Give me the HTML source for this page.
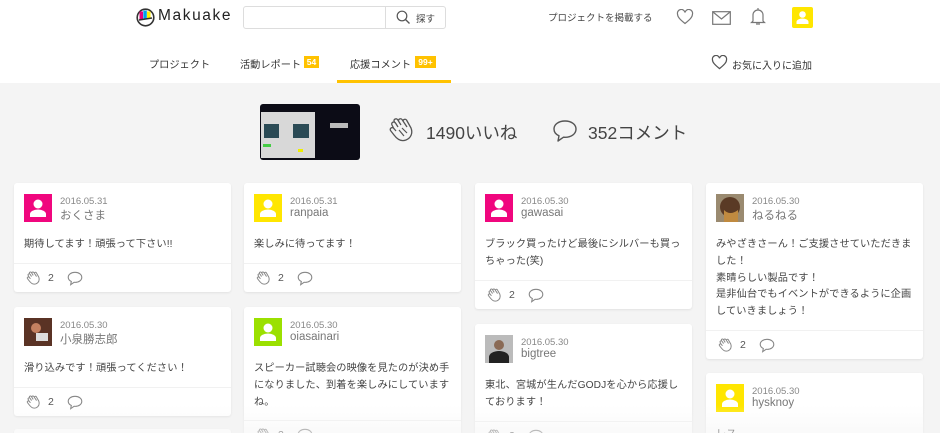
<!DOCTYPE html>
<html><head><meta charset="utf-8">
<style>
*{margin:0;padding:0;box-sizing:border-box}
html,body{width:940px;height:433px;overflow:hidden}
body{background:#f4f4f4;font-family:"Liberation Sans","Noto Sans CJK JP",sans-serif;color:#444;position:relative}
.hdr{position:absolute;left:0;top:0;width:940px;height:83px;background:#fff}
.abs{position:absolute}
.t{white-space:nowrap}
.card{position:absolute;width:217px;background:#fff;border-radius:3px;box-shadow:0 1px 2px rgba(0,0,0,.08);overflow:hidden}
.av{position:absolute;left:10px;top:11px;width:28px;height:28px}
.av svg{display:block}
.dt{position:absolute;left:46px;top:13px;font-size:9.5px;color:#888}
.nm{position:absolute;left:46px;top:24px;font-size:11.5px;color:#777}
.bd{padding:54px 8px 9px 10px;font-size:10.2px;letter-spacing:0.1px;line-height:16.8px;color:#444}
.ft{border-top:1px solid #f1f1f1;height:29px;position:relative}
.ft .clap{position:absolute;left:12px;top:7px}
.ft .n{position:absolute;left:34px;top:8px;font-size:10.5px;color:#555}
.ft .bub{position:absolute;left:53px;top:7px}
.fade{position:absolute;left:0;top:405px;width:940px;height:28px;background:linear-gradient(rgba(244,244,244,0),rgba(244,244,244,.5))}
</style></head><body>
<div class="hdr">
 <svg class="abs" style="left:136px;top:8px" width="19" height="19" viewBox="0 0 19 19">
  <circle cx="9.5" cy="9.5" r="8.3" fill="#fff" stroke="#333" stroke-width="1.6"/>
  <rect x="3.5" y="3.5" width="3.5" height="8" fill="#e6007e"/>
  <rect x="7.3" y="2.5" width="3.5" height="8" fill="#00a0e9"/>
  <rect x="11" y="3.5" width="3.5" height="7" fill="#fff100"/>
  <path d="M3 12 L16 10" stroke="#333" stroke-width="1.4" fill="none"/>
 </svg>
 <div class="abs t" style="left:158px;top:7px;font-size:15.5px;letter-spacing:1.6px;color:#222">Makuake</div>
 <div class="abs" style="left:243px;top:6px;width:203px;height:23px;border:1px solid #ddd;border-radius:3px"></div>
 <div class="abs" style="left:385px;top:6px;width:1px;height:23px;background:#ddd"></div>
 <svg class="abs" style="left:396px;top:10px" width="15" height="15" viewBox="0 0 15 15"><circle cx="6" cy="6" r="4.8" fill="none" stroke="#555" stroke-width="1.2"/><path d="M9.5 9.5L13.5 13.5" stroke="#555" stroke-width="1.3"/></svg>
 <div class="abs t" style="left:416px;top:11px;font-size:9.5px;color:#444">探す</div>
 <div class="abs t" style="left:548px;top:10px;font-size:9.5px;color:#444">プロジェクトを掲載する</div>
 <svg class="abs" style="left:676px;top:9px" width="18" height="16" viewBox="0 0 18 16"><path d="M9 14.5 C4 10.5 1.5 8 1.5 5 A3.6 3.6 0 0 1 9 3.5 A3.6 3.6 0 0 1 16.5 5 C16.5 8 14 10.5 9 14.5Z" fill="none" stroke="#777" stroke-width="1.2"/></svg>
 <svg class="abs" style="left:712px;top:11px" width="19" height="14" viewBox="0 0 19 14"><rect x="0.7" y="0.7" width="17.6" height="12.6" fill="none" stroke="#777" stroke-width="1.2"/><path d="M1 1L9.5 8L18 1" fill="none" stroke="#777" stroke-width="1.2"/></svg>
 <svg class="abs" style="left:750px;top:7px" width="16" height="19" viewBox="0 0 16 19"><path d="M8 1v2 M3 14V8a5 5 0 0 1 10 0v6l1.5 1.5h-13Z M6 17h4" fill="none" stroke="#777" stroke-width="1.2"/></svg>
 <div class="abs" style="left:792px;top:7px;width:21px;height:21px;background:#ffe600;border-radius:2px"><svg width="21" height="21" viewBox="0 0 21 21"><circle cx="10.5" cy="7.5" r="3.3" fill="#fff"/><path d="M4.5 17v-2a6 3.5 0 0 1 12 0v2Z" fill="#fff"/></svg></div>
 <div class="abs t" style="left:149px;top:56px;font-size:10.2px;color:#333">プロジェクト</div>
 <div class="abs t" style="left:240px;top:56px;font-size:10.2px;color:#333">活動レポート</div>
 <div class="abs t" style="left:304px;top:56px;width:15px;height:12px;background:#ffc200;color:#fff;font-size:8.5px;font-weight:bold;text-align:center;line-height:12px">54</div>
 <div class="abs t" style="left:350px;top:56px;font-size:10.2px;color:#333">応援コメント</div>
 <div class="abs t" style="left:415px;top:56px;width:21px;height:12px;background:#ffc200;color:#fff;font-size:8.5px;font-weight:bold;text-align:center;line-height:12px">99+</div>
 <div class="abs" style="left:337px;top:80px;width:114px;height:3px;background:#ffc200"></div>
 <svg class="abs" style="left:711px;top:55px" width="17" height="15" viewBox="0 0 18 16"><path d="M9 14.5 C4 10.5 1.5 8 1.5 5 A3.6 3.6 0 0 1 9 3.5 A3.6 3.6 0 0 1 16.5 5 C16.5 8 14 10.5 9 14.5Z" fill="none" stroke="#555" stroke-width="1.3"/></svg>
 <div class="abs t" style="left:732px;top:57px;font-size:10px;color:#333">お気に入りに追加</div>
</div>

<div class="abs" style="left:260px;top:104px;width:100px;height:56px;background:#0c0c16;border-radius:3px;overflow:hidden">
 <div class="abs" style="left:1px;top:8px;width:54px;height:46px;background:#d8d8d8"></div>
 <div class="abs" style="left:4px;top:20px;width:15px;height:14px;background:#2a4a55"></div>
 <div class="abs" style="left:33px;top:20px;width:16px;height:14px;background:#2a4a55"></div>
 <div class="abs" style="left:3px;top:40px;width:8px;height:3px;background:#4c4"></div>
 <div class="abs" style="left:38px;top:45px;width:5px;height:3px;background:#ee0"></div>
 <div class="abs" style="left:70px;top:19px;width:18px;height:5px;background:#bbb"></div>
</div>
<svg class="abs" style="left:388px;top:117px" width="27" height="27" viewBox="0 0 27 27"><path d="M6 12 L4 8 a2 2 0 0 1 3.5-2 L10 10 M7 6 L6 4 a2 2 0 0 1 3.5-1.5 L13 8 M10.5 3.5 a2 2 0 0 1 3.5-1 L19 10 M15 4 a2 2 0 0 1 3.5-1 L23 11 C25 16 23 21 18 23 C13 25 9 22 6 18 L2.5 13.5 a2 2 0 0 1 3-2.5 L8 14" fill="none" stroke="#555" stroke-width="1.3" stroke-linejoin="round"/><path d="M11 13 L16 19 M14 11 L19 16" stroke="#555" stroke-width="1.2"/></svg>
<div class="abs t" style="left:426px;top:120px;font-size:17.5px;color:#444">1490いいね</div>
<svg class="abs" style="left:552px;top:119px" width="26" height="24" viewBox="0 0 26 24"><path d="M13 2C6.5 2 2 5.5 2 10c0 3 2 5.5 5 6.8L6 22l5.5-3.8c.5 0 1 .1 1.5.1 6.5 0 11-3.6 11-8.2S19.5 2 13 2Z" fill="none" stroke="#555" stroke-width="1.4" stroke-linejoin="round"/></svg>
<div class="abs t" style="left:588px;top:120px;font-size:17.5px;color:#444">352コメント</div>

<div class="card" style="left:14px;top:183px">
 <div class="av" style="background:#f0067e"><svg width="28" height="28" viewBox="0 0 28 28"><circle cx="14" cy="10" r="4.5" fill="#fff"/><path d="M6 23v-3a8 4.5 0 0 1 16 0v3Z" fill="#fff"/></svg></div>
 <div class="dt">2016.05.31</div><div class="nm">おくさま</div>
 <div class="bd">期待してます！頑張って下さい!!</div>
 <div class="ft"><svg class="clap" width="15" height="15" viewBox="0 0 27 27"><path d="M6 12 L4 8 a2 2 0 0 1 3.5-2 L10 10 M7 6 L6 4 a2 2 0 0 1 3.5-1.5 L13 8 M10.5 3.5 a2 2 0 0 1 3.5-1 L19 10 M15 4 a2 2 0 0 1 3.5-1 L23 11 C25 16 23 21 18 23 C13 25 9 22 6 18 L2.5 13.5 a2 2 0 0 1 3-2.5 L8 14" fill="none" stroke="#888" stroke-width="1.8"/></svg><span class="n">2</span><svg class="bub" width="16" height="15" viewBox="0 0 26 24"><path d="M13 2C6.5 2 2 5.5 2 10c0 3 2 5.5 5 6.8L6 22l5.5-3.8c.5 0 1 .1 1.5.1 6.5 0 11-3.6 11-8.2S19.5 2 13 2Z" fill="none" stroke="#888" stroke-width="1.8"/></svg></div>
</div>

<div class="card" style="left:14px;top:307px">
 <div class="av"><svg width="28" height="28"><rect width="28" height="28" fill="#5a3325"/><circle cx="12" cy="10" r="5" fill="#c48060"/><rect x="12" y="15" width="12" height="8" fill="#ddd"/></svg></div>
 <div class="dt">2016.05.30</div><div class="nm">小泉勝志郎</div>
 <div class="bd">滑り込みです！頑張ってください！</div>
 <div class="ft"><svg class="clap" width="15" height="15" viewBox="0 0 27 27"><path d="M6 12 L4 8 a2 2 0 0 1 3.5-2 L10 10 M7 6 L6 4 a2 2 0 0 1 3.5-1.5 L13 8 M10.5 3.5 a2 2 0 0 1 3.5-1 L19 10 M15 4 a2 2 0 0 1 3.5-1 L23 11 C25 16 23 21 18 23 C13 25 9 22 6 18 L2.5 13.5 a2 2 0 0 1 3-2.5 L8 14" fill="none" stroke="#888" stroke-width="1.8"/></svg><span class="n">2</span><svg class="bub" width="16" height="15" viewBox="0 0 26 24"><path d="M13 2C6.5 2 2 5.5 2 10c0 3 2 5.5 5 6.8L6 22l5.5-3.8c.5 0 1 .1 1.5.1 6.5 0 11-3.6 11-8.2S19.5 2 13 2Z" fill="none" stroke="#888" stroke-width="1.8"/></svg></div>
</div>
<div class="card" style="left:14px;top:429px;height:20px"></div>

<div class="card" style="left:244px;top:183px">
 <div class="av" style="background:#ffe600"><svg width="28" height="28" viewBox="0 0 28 28"><circle cx="14" cy="10" r="4.5" fill="#fff"/><path d="M6 23v-3a8 4.5 0 0 1 16 0v3Z" fill="#fff"/></svg></div>
 <div class="dt">2016.05.31</div><div class="nm">ranpaia</div>
 <div class="bd">楽しみに待ってます！</div>
 <div class="ft"><svg class="clap" width="15" height="15" viewBox="0 0 27 27"><path d="M6 12 L4 8 a2 2 0 0 1 3.5-2 L10 10 M7 6 L6 4 a2 2 0 0 1 3.5-1.5 L13 8 M10.5 3.5 a2 2 0 0 1 3.5-1 L19 10 M15 4 a2 2 0 0 1 3.5-1 L23 11 C25 16 23 21 18 23 C13 25 9 22 6 18 L2.5 13.5 a2 2 0 0 1 3-2.5 L8 14" fill="none" stroke="#888" stroke-width="1.8"/></svg><span class="n">2</span><svg class="bub" width="16" height="15" viewBox="0 0 26 24"><path d="M13 2C6.5 2 2 5.5 2 10c0 3 2 5.5 5 6.8L6 22l5.5-3.8c.5 0 1 .1 1.5.1 6.5 0 11-3.6 11-8.2S19.5 2 13 2Z" fill="none" stroke="#888" stroke-width="1.8"/></svg></div>
</div>

<div class="card" style="left:244px;top:307px">
 <div class="av" style="background:#9be000"><svg width="28" height="28" viewBox="0 0 28 28"><circle cx="14" cy="10" r="4.5" fill="#fff"/><path d="M6 23v-3a8 4.5 0 0 1 16 0v3Z" fill="#fff"/></svg></div>
 <div class="dt">2016.05.30</div><div class="nm">oiasainari</div>
 <div class="bd">スピーカー試聴会の映像を見たのが決め手<br>になりました、到着を楽しみにしています<br>ね。</div>
 <div class="ft"><svg class="clap" width="15" height="15" viewBox="0 0 27 27"><path d="M6 12 L4 8 a2 2 0 0 1 3.5-2 L10 10 M7 6 L6 4 a2 2 0 0 1 3.5-1.5 L13 8 M10.5 3.5 a2 2 0 0 1 3.5-1 L19 10 M15 4 a2 2 0 0 1 3.5-1 L23 11 C25 16 23 21 18 23 C13 25 9 22 6 18 L2.5 13.5 a2 2 0 0 1 3-2.5 L8 14" fill="none" stroke="#888" stroke-width="1.8"/></svg><span class="n">2</span><svg class="bub" width="16" height="15" viewBox="0 0 26 24"><path d="M13 2C6.5 2 2 5.5 2 10c0 3 2 5.5 5 6.8L6 22l5.5-3.8c.5 0 1 .1 1.5.1 6.5 0 11-3.6 11-8.2S19.5 2 13 2Z" fill="none" stroke="#888" stroke-width="1.8"/></svg></div>
</div>

<div class="card" style="left:475px;top:183px">
 <div class="av" style="background:#f0067e"><svg width="28" height="28" viewBox="0 0 28 28"><circle cx="14" cy="10" r="4.5" fill="#fff"/><path d="M6 23v-3a8 4.5 0 0 1 16 0v3Z" fill="#fff"/></svg></div>
 <div class="dt">2016.05.30</div><div class="nm">gawasai</div>
 <div class="bd">ブラック買ったけど最後にシルバーも買っ<br>ちゃった(笑)</div>
 <div class="ft"><svg class="clap" width="15" height="15" viewBox="0 0 27 27"><path d="M6 12 L4 8 a2 2 0 0 1 3.5-2 L10 10 M7 6 L6 4 a2 2 0 0 1 3.5-1.5 L13 8 M10.5 3.5 a2 2 0 0 1 3.5-1 L19 10 M15 4 a2 2 0 0 1 3.5-1 L23 11 C25 16 23 21 18 23 C13 25 9 22 6 18 L2.5 13.5 a2 2 0 0 1 3-2.5 L8 14" fill="none" stroke="#888" stroke-width="1.8"/></svg><span class="n">2</span><svg class="bub" width="16" height="15" viewBox="0 0 26 24"><path d="M13 2C6.5 2 2 5.5 2 10c0 3 2 5.5 5 6.8L6 22l5.5-3.8c.5 0 1 .1 1.5.1 6.5 0 11-3.6 11-8.2S19.5 2 13 2Z" fill="none" stroke="#888" stroke-width="1.8"/></svg></div>
</div>

<div class="card" style="left:475px;top:324px">
 <div class="av"><svg width="28" height="28"><rect width="28" height="28" fill="#bbb"/><circle cx="14" cy="10" r="5" fill="#8a6a55"/><path d="M4 28v-6a10 6 0 0 1 20 0v6Z" fill="#222"/></svg></div>
 <div class="dt">2016.05.30</div><div class="nm">bigtree</div>
 <div class="bd">東北、宮城が生んだGODJを心から応援し<br>ております！</div>
 <div class="ft"><svg class="clap" width="15" height="15" viewBox="0 0 27 27"><path d="M6 12 L4 8 a2 2 0 0 1 3.5-2 L10 10 M7 6 L6 4 a2 2 0 0 1 3.5-1.5 L13 8 M10.5 3.5 a2 2 0 0 1 3.5-1 L19 10 M15 4 a2 2 0 0 1 3.5-1 L23 11 C25 16 23 21 18 23 C13 25 9 22 6 18 L2.5 13.5 a2 2 0 0 1 3-2.5 L8 14" fill="none" stroke="#888" stroke-width="1.8"/></svg><span class="n">2</span><svg class="bub" width="16" height="15" viewBox="0 0 26 24"><path d="M13 2C6.5 2 2 5.5 2 10c0 3 2 5.5 5 6.8L6 22l5.5-3.8c.5 0 1 .1 1.5.1 6.5 0 11-3.6 11-8.2S19.5 2 13 2Z" fill="none" stroke="#888" stroke-width="1.8"/></svg></div>
</div>

<div class="card" style="left:706px;top:183px">
 <div class="av"><svg width="28" height="28"><rect width="28" height="28" fill="#9a8a70"/><circle cx="14" cy="13" r="10" fill="#5a3a25"/><path d="M8 16q6 6 14 0v12H8Z" fill="#c08a40"/></svg></div>
 <div class="dt">2016.05.30</div><div class="nm">ねるねる</div>
 <div class="bd">みやざきさーん！ご支援させていただきま<br>した！<br>素晴らしい製品です！<br>是非仙台でもイベントができるように企画<br>していきましょう！</div>
 <div class="ft"><svg class="clap" width="15" height="15" viewBox="0 0 27 27"><path d="M6 12 L4 8 a2 2 0 0 1 3.5-2 L10 10 M7 6 L6 4 a2 2 0 0 1 3.5-1.5 L13 8 M10.5 3.5 a2 2 0 0 1 3.5-1 L19 10 M15 4 a2 2 0 0 1 3.5-1 L23 11 C25 16 23 21 18 23 C13 25 9 22 6 18 L2.5 13.5 a2 2 0 0 1 3-2.5 L8 14" fill="none" stroke="#888" stroke-width="1.8"/></svg><span class="n">2</span><svg class="bub" width="16" height="15" viewBox="0 0 26 24"><path d="M13 2C6.5 2 2 5.5 2 10c0 3 2 5.5 5 6.8L6 22l5.5-3.8c.5 0 1 .1 1.5.1 6.5 0 11-3.6 11-8.2S19.5 2 13 2Z" fill="none" stroke="#888" stroke-width="1.8"/></svg></div>
</div>

<div class="card" style="left:706px;top:373px">
 <div class="av" style="background:#ffe600"><svg width="28" height="28" viewBox="0 0 28 28"><circle cx="14" cy="10" r="4.5" fill="#fff"/><path d="M6 23v-3a8 4.5 0 0 1 16 0v3Z" fill="#fff"/></svg></div>
 <div class="dt">2016.05.30</div><div class="nm">hysknoy</div>
 <div class="bd">レス</div>
</div>
<div class="fade"></div>
</body></html>
